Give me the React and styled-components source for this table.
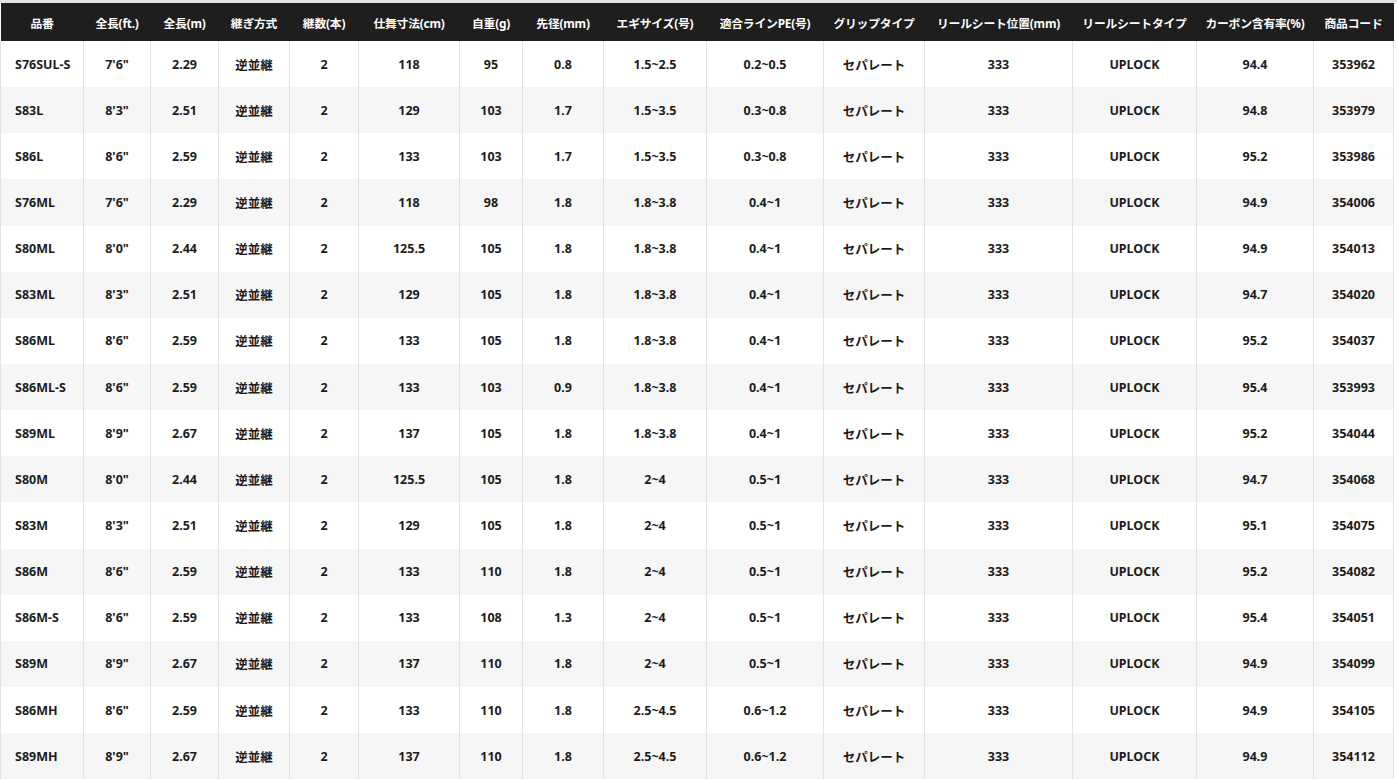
import React from 'react';
import styled, { createGlobalStyle } from 'styled-components';

const GlobalStyle = createGlobalStyle`
  html, body {
    margin: 0;
    padding: 0;
    background: #fff;
  }
  body {
    font-family: "Noto Sans", "Noto Sans CJK JP", sans-serif;
  }
`;

const columns = [
  { label: '品番', width: 83 },
  { label: '全長(ft.)', width: 67 },
  { label: '全長(m)', width: 68 },
  { label: '継ぎ方式', width: 71 },
  { label: '継数(本)', width: 69 },
  { label: '仕舞寸法(cm)', width: 101 },
  { label: '自重(g)', width: 63 },
  { label: '先径(mm)', width: 81 },
  { label: 'エギサイズ(号)', width: 103 },
  { label: '適合ラインPE(号)', width: 117 },
  { label: 'グリップタイプ', width: 101 },
  { label: 'リールシート位置(mm)', width: 148 },
  { label: 'リールシートタイプ', width: 124 },
  { label: 'カーボン含有率(%)', width: 117 },
  { label: '商品コード', width: 80 },
];

const rows = [
  ['S76SUL-S', '7\'6"', '2.29', '118', '95', '0.8', '1.5~2.5', '0.2~0.5', '94.4', '353962'],
  ['S83L', '8\'3"', '2.51', '129', '103', '1.7', '1.5~3.5', '0.3~0.8', '94.8', '353979'],
  ['S86L', '8\'6"', '2.59', '133', '103', '1.7', '1.5~3.5', '0.3~0.8', '95.2', '353986'],
  ['S76ML', '7\'6"', '2.29', '118', '98', '1.8', '1.8~3.8', '0.4~1', '94.9', '354006'],
  ['S80ML', '8\'0"', '2.44', '125.5', '105', '1.8', '1.8~3.8', '0.4~1', '94.9', '354013'],
  ['S83ML', '8\'3"', '2.51', '129', '105', '1.8', '1.8~3.8', '0.4~1', '94.7', '354020'],
  ['S86ML', '8\'6"', '2.59', '133', '105', '1.8', '1.8~3.8', '0.4~1', '95.2', '354037'],
  ['S86ML-S', '8\'6"', '2.59', '133', '103', '0.9', '1.8~3.8', '0.4~1', '95.4', '353993'],
  ['S89ML', '8\'9"', '2.67', '137', '105', '1.8', '1.8~3.8', '0.4~1', '95.2', '354044'],
  ['S80M', '8\'0"', '2.44', '125.5', '105', '1.8', '2~4', '0.5~1', '94.7', '354068'],
  ['S83M', '8\'3"', '2.51', '129', '105', '1.8', '2~4', '0.5~1', '95.1', '354075'],
  ['S86M', '8\'6"', '2.59', '133', '110', '1.8', '2~4', '0.5~1', '95.2', '354082'],
  ['S86M-S', '8\'6"', '2.59', '133', '108', '1.3', '2~4', '0.5~1', '95.4', '354051'],
  ['S89M', '8\'9"', '2.67', '137', '110', '1.8', '2~4', '0.5~1', '94.9', '354099'],
  ['S86MH', '8\'6"', '2.59', '133', '110', '1.8', '2.5~4.5', '0.6~1.2', '94.9', '354105'],
  ['S89MH', '8\'9"', '2.67', '137', '110', '1.8', '2.5~4.5', '0.6~1.2', '94.9', '354112'],
];

// fixed values shared by every rod
const toCells = (r) => [
  r[0], r[1], r[2], '逆並継', '2', r[3], r[4], r[5], r[6], r[7],
  'セパレート', '333', 'UPLOCK', r[8], r[9],
];

const Page = styled.div`
  border-top: 3px solid #e4e4e4;
  width: 1397px;
`;

const Table = styled.table`
  width: 1393px;
  table-layout: fixed;
  border-collapse: collapse;
  border-spacing: 0;
`;

const HeadCell = styled.th`
  height: 38px;
  padding: 0;
  background: #1e1e1e;
  color: #fff;
  font-size: 11.8px;
  font-weight: 700;
  text-align: center;
  white-space: nowrap;
  letter-spacing: -0.2px;
`;

const Row = styled.tr`
  height: 46.15px;
  background: ${(p) => (p.$alt ? '#f6f6f6' : '#fff')};
`;

const Cell = styled.td`
  padding: 0 0 0 ${(p) => (p.$first ? '14px' : '0')};
  border-left: 1px solid #e2e2e2;
  border-right: 1px solid #e2e2e2;
  color: #1c1c1c;
  font-size: 12.5px;
  font-weight: 700;
  text-align: ${(p) => (p.$first ? 'left' : 'center')};
  white-space: nowrap;
`;

export default function App() {
  return (
    <Page>
      <GlobalStyle />
      <Table>
        <colgroup>
          {columns.map((c) => (
            <col key={c.label} style={{ width: c.width }} />
          ))}
        </colgroup>
        <thead>
          <tr>
            {columns.map((c) => (
              <HeadCell key={c.label}>{c.label}</HeadCell>
            ))}
          </tr>
        </thead>
        <tbody>
          {rows.map((r, i) => (
            <Row key={r[0]} $alt={i % 2 === 1}>
              {toCells(r).map((v, j) => (
                <Cell key={j} $first={j === 0}>{v}</Cell>
              ))}
            </Row>
          ))}
        </tbody>
      </Table>
    </Page>
  );
}
